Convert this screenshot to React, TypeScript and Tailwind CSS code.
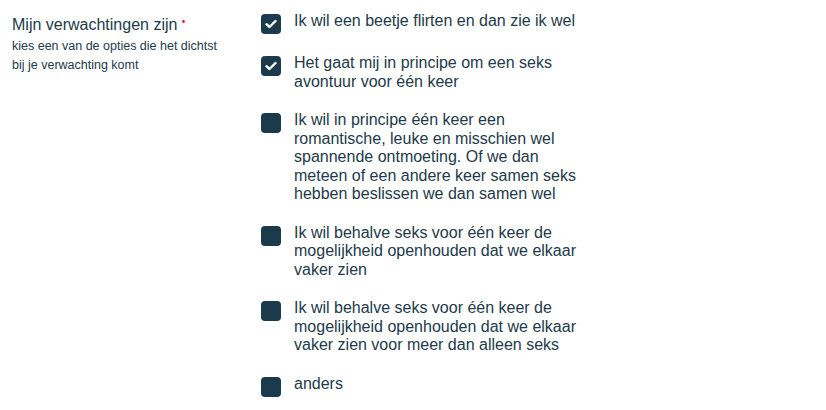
import { useState } from 'react'

const options = [
  { label: 'Ik wil een beetje flirten en dan zie ik wel', checked: true },
  { label: 'Het gaat mij in principe om een seks avontuur voor één keer', checked: true },
  {
    label:
      'Ik wil in principe één keer een romantische, leuke en misschien wel spannende ontmoeting. Of we dan meteen of een andere keer samen seks hebben beslissen we dan samen wel',
    checked: false,
  },
  {
    label: 'Ik wil behalve seks voor één keer de mogelijkheid openhouden dat we elkaar vaker zien',
    checked: false,
  },
  {
    label:
      'Ik wil behalve seks voor één keer de mogelijkheid openhouden dat we elkaar vaker zien voor meer dan alleen seks',
    checked: false,
  },
  { label: 'anders', checked: false },
]

function Checkbox({ checked, onClick }: { checked: boolean; onClick: () => void }) {
  return (
    <button
      type="button"
      onClick={onClick}
      className="mt-[2px] flex h-5 w-5 shrink-0 items-center justify-center rounded-[4px] bg-[#1b3a4b]"
    >
      {checked && (
        <svg width="12" height="10" viewBox="0 0 12 10" fill="none">
          <path d="M1.5 5.2 4.5 8 10.5 2" stroke="white" strokeWidth="2.4" strokeLinecap="round" strokeLinejoin="round" />
        </svg>
      )}
    </button>
  )
}

export default function App() {
  const [state, setState] = useState(options.map((o) => o.checked))

  return (
    <div className="flex min-h-[410px] w-[826px] bg-white pl-3 font-['Liberation_Sans',Arial,sans-serif] text-[#223a4a]">
      {/* label column */}
      <div className="w-[249px] shrink-0 pt-[15px]">
        <div className="text-[16px] leading-[19px]">
          Mijn verwachtingen zijn{' '}
          <span className="relative -top-[5px] text-[10px] text-[#e6004c]">•</span>
        </div>
        <p className="mt-[1px] text-[12.5px] leading-[19px]">
          kies een van de opties die het dichtst
          <br />
          bij je verwachting komt
        </p>
      </div>

      {/* options */}
      <div className="flex flex-col gap-5 pt-[12px]">
        {options.map((o, i) => (
          <label key={i} className="flex items-start gap-[13px]">
            <Checkbox
              checked={state[i]}
              onClick={() => setState((s) => s.map((v, j) => (j === i ? !v : v)))}
            />
            <span className="max-w-[290px] text-[16px] leading-[18.5px]">{o.label}</span>
          </label>
        ))}
      </div>
    </div>
  )
}
